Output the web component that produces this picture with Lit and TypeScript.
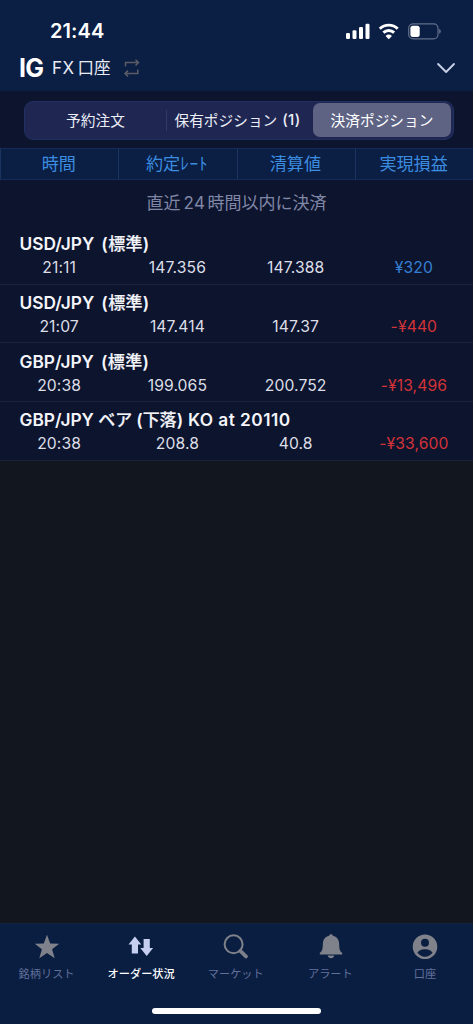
import { LitElement, html, svg, css } from "lit";
import { customElement } from "lit/decorators.js";
import { classMap } from "lit/directives/class-map.js";

interface Deal {
  name: string;
  kind: string;
  time: string;
  open: string;
  close: string;
  pnl: string;
}

const deals: Deal[] = [
  { name: "USD/JPY", kind: "std", time: "21:11", open: "147.356", close: "147.388", pnl: "¥320" },
  { name: "USD/JPY", kind: "std", time: "21:07", open: "147.414", close: "147.37", pnl: "-¥440" },
  { name: "GBP/JPY", kind: "std", time: "20:38", open: "199.065", close: "200.752", pnl: "-¥13,496" },
  { name: "GBP/JPY", kind: "bear", time: "20:38", open: "208.8", close: "40.8", pnl: "-¥33,600" },
];

const icons = {
  star: svg`<path d="M14 1.8l3.2 8.6 9 .3-7.1 5.6 2.6 8.9-7.7-5.3-7.7 5.3 2.6-8.9-7.1-5.6 9-.3z"/>`,
  orders: svg`<path d="M7.900 3.600l6.400 7.900h-3.300v9.100h-6.200v-9.100H1.500z"/><path d="M16.600 6h6.200v9h3.300l-6.400 8.100-6.400-8.100h3.300z"/>`,
  search: svg`<circle cx="11.6" cy="11.3" r="9" fill="none" stroke="currentColor" stroke-width="2"/><path d="M18.500 18l5.500 5.500" fill="none" stroke="currentColor" stroke-width="3.8" stroke-linecap="round"/><path d="M17 17l2 2" stroke="currentColor" stroke-width="2"/>`,
  bell: svg`<path d="M14 1.2c1 0 1.800.7 1.900 1.500 3.900.9 6 3.800 6.200 7.600.2 5 .5 8.400 3.100 9.400v1.700H2.800v-1.700c2.600-1 2.900-4.400 3.100-9.400.2-3.800 2.300-6.700 6.200-7.600.1-.8.900-1.500 1.900-1.500z"/><path d="M10.700 22.600h6.600c-.5 1.900-1.700 2.700-3.300 2.700s-2.800-.8-3.300-2.700z"/>`,
  user: svg`<path fill-rule="evenodd" d="M14 1.400a12.300 12.300 0 1 1 0 24.600a12.300 12.300 0 0 1 0-24.600zM14 5.800a4 4 0 1 0 0 8a4 4 0 0 0 0-8zM14 16.200c-3.500 0-6.700 1.500-7.500 3.600c1.600 2.400 4.400 3.900 7.500 3.900s5.900-1.500 7.500-3.900c-.8-2.100-4-3.600-7.500-3.600z"/>`,
};

const tabs = [
  { icon: icons.star, label: "銘柄リスト" },
  { icon: icons.orders, label: "オーダー状況", active: true },
  { icon: icons.search, label: "マーケット" },
  { icon: icons.bell, label: "アラート" },
  { icon: icons.user, label: "口座" },
];

@customElement("status-bar")
class StatusBar extends LitElement {
  static styles = css`
    :host { display: flex; height: 48px; box-sizing: border-box; padding: 15px 32px 0 50px; justify-content: space-between; }
    .clock { font-size: 20px; line-height: 33px; font-weight: 600; letter-spacing: 0.100px; color: #fff; }
    .signals { width: 96px; height: 32px; }
  `;
  render() {
    return html`
      <span class="clock">21:44</span>
      <svg class="signals" viewBox="345 15 96 32">
        <g fill="#fff">
          <rect x="346" y="33" width="4" height="6" rx="1.200" />
          <rect x="352.500" y="30.300" width="4" height="8.700" rx="1.200" />
          <rect x="359" y="27" width="4" height="12" rx="1.200" />
          <rect x="365.500" y="23.800" width="4" height="15.200" rx="1.200" />
        </g>
        <g fill="none" stroke="#fff" stroke-width="2.900">
          <path d="M379.800 28.700a12.900 12.900 0 0 1 17.900 0" />
          <path d="M383.400 32.600a7.700 7.700 0 0 1 10.700 0" />
        </g>
        <path d="M388.750 39.200l-3.200-3.300a4.600 4.600 0 0 1 6.400 0z" fill="#fff" />
        <rect x="408.700" y="23.900" width="29.300" height="14.900" rx="4.400" fill="none" stroke="#626f8c" stroke-width="1.200" />
        <path d="M439.300 29v4.600c1.800-.6 1.800-4 0-4.600z" fill="#7b86a0" />
        <rect x="410.400" y="25.700" width="9.300" height="11.300" rx="2.500" fill="#fff" />
      </svg>
    `;
  }
}

@customElement("account-bar")
class AccountBar extends LitElement {
  static styles = css`
    :host { display: flex; height: 43px; box-sizing: border-box; padding: 0 17px 0 19px; align-items: flex-start; color: #fff; }
    .logo { width: 33px; font-size: 25px; line-height: 41px; font-weight: 700; letter-spacing: -0.700px; }
    .account { width: 71px; font-size: 17px; line-height: 41px; letter-spacing: 0.400px; color: #e8ebf5; white-space: nowrap; }
    .kanji { margin-left: 3px; font-size: 16.500px; letter-spacing: 0; }
    .swap { width: 18px; height: 20px; margin-top: 10px; }
    .chevron { width: 20px; height: 12px; margin: 14px 0 0 auto; }
  `;
  render() {
    return html`
      <span class="logo">IG</span>
      <span class="account">FX<span class="kanji">口座</span></span>
      <svg class="swap" viewBox="123 58 18 20" fill="none" stroke="#5b5d66" stroke-width="1.500">
        <path d="M125.500 66.500v-3.900h12.600M135.500 59.700l3 2.900-3 2.900M137.800 69.500v4h-12.600M128 70.600l-3 2.900 3 2.900" />
      </svg>
      <svg class="chevron" viewBox="0 0 20 12" fill="none" stroke="#c8d0e8" stroke-width="1.900" stroke-linecap="round" stroke-linejoin="round">
        <path d="M2.100 2l8 8 7.900-8" />
      </svg>
    `;
  }
}

@customElement("order-tabs")
class OrderTabs extends LitElement {
  static styles = css`
    :host { display: block; padding: 10px 19.500px 8px 24px; }
    .track { display: grid; grid-template-columns: 141px 146px 138.500px; height: 39px; box-sizing: border-box; padding: 1px; border: 1px solid #1f3061; border-radius: 9px; background: #1f2651; }
    .segment { display: flex; align-items: center; justify-content: center; height: 33px; font-size: 14.700px; color: #eceef7; white-space: nowrap; box-sizing: border-box; }
    .first { height: 35px; padding: 0 2px 2px 0; background: linear-gradient(#333a62, #333a62) no-repeat right center / 1px 21px; }
    .count { margin-left: 5px; font-size: 15px; font-weight: 500; letter-spacing: 0.300px; }
    .middle { padding-right: 5px; }
    .selected { height: 34px; padding-bottom: 1px; border-radius: 7px; background: #5e6384; color: #fff; margin-right: 0.500px; }
  `;
  render() {
    return html`
      <div class="track">
        <div class="segment first">予約注文</div>
        <div class="segment middle">保有ポジション<span class="count">(1)</span></div>
        <div class="segment selected">決済ポジション</div>
      </div>
    `;
  }
}

@customElement("deal-table")
class DealTable extends LitElement {
  static styles = css`
    :host { display: block; }
    .head, .values { display: grid; grid-template-columns: repeat(4, 118.250px); text-align: center; }
    .head { height: 32px; box-sizing: border-box; border: solid #132d58; border-width: 1px 0; background: #0a1f43; }
    .title { padding-right: 1.500px; border-left: 1px solid #1c3460; font-size: 17.100px; line-height: 30px; color: #3c8ce0; white-space: nowrap; }
    .kana { letter-spacing: 0.800px; }
    .caption { height: 46px; line-height: 47px; text-align: center; font-size: 17px; color: #8087a6; }
    .digits { margin: 0 2px 0 3px; letter-spacing: 0.500px; }
    .row { height: 58.650px; box-sizing: border-box; padding-top: 6.300px; border-bottom: 1px solid #1a223d; }
    .name { padding-left: 19.500px; font-size: 17.300px; line-height: 23px; font-weight: 600; color: #f4f5fa; white-space: pre; }
    .cjk { font-size: 17px; font-weight: 500; -webkit-text-stroke: 0.200px currentColor; }
    .suffix { margin-left: -0.500px; }
    .strike { letter-spacing: 0.450px; }
    .std { margin-left: 2.500px; letter-spacing: 0.300px; }
    .values { font-size: 15.700px; line-height: 23px; color: #dcdee6; letter-spacing: 0.100px; }
    .up { color: #3580d5; }
    .down { color: #d23338; }
  `;
  render() {
    return html`
      <div class="head">
        <div class="title">時間</div>
        <div class="title">約定<span class="kana">ﾚｰﾄ</span></div>
        <div class="title">清算値</div>
        <div class="title">実現損益</div>
      </div>
      <div class="caption">直近<span class="digits">24</span>時間以内に決済</div>
      ${deals.map(
        (d) => html`
          <div class="row">
            <div class="name">${d.name}${d.kind === "std"
              ? html`<span class="std"> (<span class="cjk">標準</span>)</span>`
              : html` <span class="cjk">ベア</span><span class="suffix"> (<span class="cjk">下落</span>)</span><span class="strike"> KO at 20110</span>`}</div>
            <div class="values">
              <span>${d.time}</span><span>${d.open}</span><span>${d.close}</span>
              <span class=${classMap({ up: !d.pnl.startsWith("-"), down: d.pnl.startsWith("-") })}>${d.pnl}</span>
            </div>
          </div>
        `
      )}
    `;
  }
}

@customElement("bottom-nav")
class BottomNav extends LitElement {
  static styles = css`
    :host { display: flex; flex-direction: column; align-items: center; height: 101px; box-sizing: border-box; padding-top: 9px; background: #0a1e42; border-top: 1px solid #132340; }
    .tabs { display: grid; grid-template-columns: repeat(5, 94.600px); width: 473px; }
    .tab { display: flex; flex-direction: column; align-items: center; color: #7f828a; }
    .icon { width: 28px; height: 28px; margin-right: 0.800px; fill: currentColor; }
    .label { margin: 3px 1.500px 0 0; font-size: 11.200px; line-height: 20px; color: #62709a; white-space: nowrap; }
    .active { color: #c6cff0; }
    .active .label { color: #fff; font-weight: 500; }
    .home { width: 169px; height: 6px; margin-top: 24px; border-radius: 3px; background: #fff; }
  `;
  render() {
    return html`
      <div class="tabs">
        ${tabs.map(
          (t) => html`
            <div class=${classMap({ tab: true, active: !!t.active })}>
              <svg class="icon" viewBox="0 0 28 28">${t.icon}</svg>
              <span class="label">${t.label}</span>
            </div>
          `
        )}
      </div>
      <div class="home"></div>
    `;
  }
}

@customElement("app-root")
class AppRoot extends LitElement {
  static styles = css`
    :host { display: flex; flex-direction: column; width: 473px; height: 1024px; overflow: hidden; background: #12171f; font-family: Inter, "Noto Sans CJK JP", sans-serif; }
    .top { background: #0b1e43; }
    .panel { background: #0d142e; }
    .space { flex: 1; }
  `;
  render() {
    return html`
      <div class="top"><status-bar></status-bar><account-bar></account-bar></div>
      <div class="panel"><order-tabs></order-tabs><deal-table></deal-table></div>
      <div class="space"></div>
      <bottom-nav></bottom-nav>
    `;
  }
}
